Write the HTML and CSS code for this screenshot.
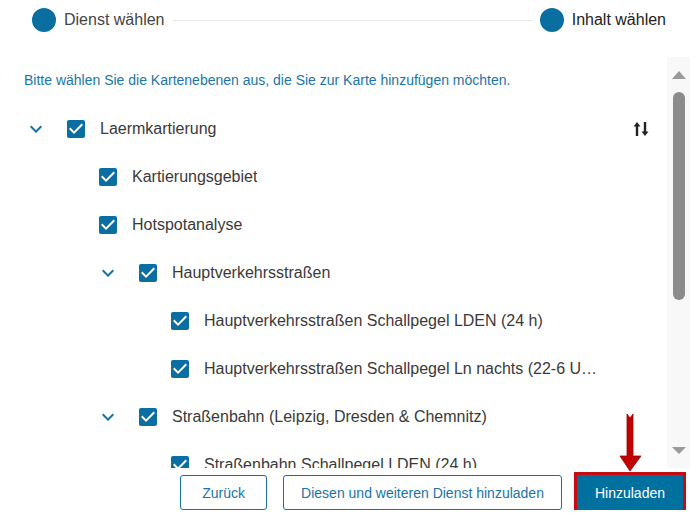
FILE: index.html
```html
<!DOCTYPE html>
<html lang="de">
<head>
    <meta charset="UTF-8">
    <meta name="viewport" content="width=device-width, initial-scale=1.0">
    <title>Dienst hinzuladen - Inhalt wählen</title>
    <link rel="stylesheet" href="styles.css">
</head>
<body>

<!-- Schritte -->
<div class="stepper">
    <div class="step">
        <span class="step-dot"></span>
        <span class="step-label">Dienst wählen</span>
    </div>
    <div class="step-line"></div>
    <div class="step step-active">
        <span class="step-dot"></span>
        <span class="step-label">Inhalt wählen</span>
    </div>
</div>

<!-- Ebenenauswahl -->
<div class="panel">
    <div class="layer-list">
        <p class="hint">Bitte wählen Sie die Kartenebenen aus, die Sie zur Karte hinzufügen möchten.</p>

        <ul class="tree">
            <li class="node d0">
                <svg class="chevron" viewBox="0 0 24 24"><path d="M16.59 8.59L12 13.17 7.41 8.59 6 10l6 6 6-6z"/></svg>
                <svg class="check" viewBox="0 0 24 24"><path d="M19 3H5c-1.11 0-2 .9-2 2v14c0 1.1.89 2 2 2h14c1.11 0 2-.9 2-2V5c0-1.1-.89-2-2-2zm-9 14l-5-5 1.41-1.41L10 14.170l7.59-7.59L19 8l-9 9z"/></svg>
                <span class="label">Laermkartierung</span>
                <span class="node-tools">
                    <svg class="sort" viewBox="0 0 16 14"><path d="M4 0L0.5 4.6h2.3V14h2.4V4.6h2.3z"/><path d="M12 14l3.5-4.6h-2.3V0h-2.4v9.4H8.5z"/></svg>
                </span>
            </li>
            <li class="node d1">
                <svg class="check" viewBox="0 0 24 24"><path d="M19 3H5c-1.11 0-2 .9-2 2v14c0 1.1.89 2 2 2h14c1.11 0 2-.9 2-2V5c0-1.1-.89-2-2-2zm-9 14l-5-5 1.41-1.41L10 14.17l7.59-7.59L19 8l-9 9z"/></svg>
                <span class="label">Kartierungsgebiet</span>
                <span class="node-tools"></span>
            </li>
            <li class="node d1">
                <svg class="check" viewBox="0 0 24 24"><path d="M19 3H5c-1.11 0-2 .9-2 2v14c0 1.1.89 2 2 2h14c1.11 0 2-.9 2-2V5c0-1.1-.89-2-2-2zm-9 14l-5-5 1.41-1.41L10 14.17l7.59-7.59L19 8l-9 9z"/></svg>
                <span class="label">Hotspotanalyse</span>
                <span class="node-tools"></span>
            </li>
            <li class="node d1">
                <svg class="chevron" viewBox="0 0 24 24"><path d="M16.59 8.59L12 13.17 7.41 8.59 6 10l6 6 6-6z"/></svg>
                <svg class="check" viewBox="0 0 24 24"><path d="M19 3H5c-1.11 0-2 .9-2 2v14c0 1.1.89 2 2 2h14c1.11 0 2-.9 2-2V5c0-1.1-.89-2-2-2zm-9 14l-5-5 1.41-1.41L10 14.17l7.59-7.59L19 8l-9 9z"/></svg>
                <span class="label">Hauptverkehrsstraßen</span>
                <span class="node-tools"></span>
            </li>
            <li class="node d2">
                <svg class="check" viewBox="0 0 24 24"><path d="M19 3H5c-1.11 0-2 .9-2 2v14c0 1.1.89 2 2 2h14c1.11 0 2-.9 2-2V5c0-1.1-.89-2-2-2zm-9 14l-5-5 1.41-1.41L10 14.17l7.59-7.59L19 8l-9 9z"/></svg>
                <span class="label">Hauptverkehrsstraßen Schallpegel LDEN (24 h)</span>
                <span class="node-tools"></span>
            </li>
            <li class="node d2">
                <svg class="check" viewBox="0 0 24 24"><path d="M19 3H5c-1.11 0-2 .9-2 2v14c0 1.1.89 2 2 2h14c1.11 0 2-.9 2-2V5c0-1.1-.89-2-2-2zm-9 14l-5-5 1.41-1.41L10 14.17l7.59-7.59L19 8l-9 9z"/></svg>
                <span class="label">Hauptverkehrsstraßen Schallpegel Ln nachts (22-6 Uhr)</span>
                <span class="node-tools"></span>
            </li>
            <li class="node d1">
                <svg class="chevron" viewBox="0 0 24 24"><path d="M16.59 8.59L12 13.17 7.41 8.59 6 10l6 6 6-6z"/></svg>
                <svg class="check" viewBox="0 0 24 24"><path d="M19 3H5c-1.11 0-2 .9-2 2v14c0 1.1.89 2 2 2h14c1.11 0 2-.9 2-2V5c0-1.1-.89-2-2-2zm-9 14l-5-5 1.41-1.41L10 14.17l7.59-7.59L19 8l-9 9z"/></svg>
                <span class="label">Straßenbahn (Leipzig, Dresden &amp; Chemnitz)</span>
                <span class="node-tools"></span>
            </li>
            <li class="node d2">
                <svg class="check" viewBox="0 0 24 24"><path d="M19 3H5c-1.11 0-2 .9-2 2v14c0 1.1.89 2 2 2h14c1.11 0 2-.9 2-2V5c0-1.1-.89-2-2-2zm-9 14l-5-5 1.41-1.41L10 14.17l7.59-7.59L19 8l-9 9z"/></svg>
                <span class="label">Straßenbahn Schallpegel LDEN (24 h)</span>
                <span class="node-tools"></span>
            </li>
        </ul>
    </div>

    <!-- Scrollleiste -->
    <div class="scrollbar">
        <span class="sb-up"></span>
        <span class="sb-thumb"></span>
        <span class="sb-down"></span>
    </div>
</div>

<!-- Aktionen -->
<div class="actions">
    <button class="btn">Zurück</button>
    <button class="btn">Diesen und weiteren Dienst hinzuladen</button>
    <span class="annotated">
        <svg class="pointer" viewBox="0 0 24 58"><path d="M8 0L11 4 14 0V42h8L11 57 1 42h7z"/></svg>
        <button class="btn btn-primary">Hinzuladen</button>
    </span>
</div>

</body>
</html>
```

FILE: styles.css
```css
body {
    font-family: 'Liberation Sans', Arial, sans-serif;
    color: #3a3a3a;
    background-color: #fff;
    margin: 0;
    padding: 0;
}

/* Schritte */
.stepper {
    display: flex;
    align-items: center;
    padding: 8px 32px 0 32px;
}
.step {
    display: flex;
    align-items: center;
    gap: 8px;
}
.step-dot {
    width: 24px;
    height: 24px;
    border-radius: 50%;
    background-color: #0a6fa0;
}
.step-label {
    font-size: 16px;
    color: #444;
}
.step-active .step-label {
    color: #222;
}
.step-line {
    flex: 1;
    height: 1px;
    margin: 0 8px;
    background-color: #e6e6e6;
}

/* Ebenenauswahl */
.panel {
    display: flex;
    height: 411px;
    margin: 25px 8px 0 0;
}
.layer-list {
    flex: 1;
    min-width: 0;
    overflow: hidden;
}
.hint {
    margin: 0;
    padding: 15px 0 0 24px;
    font-size: 14px;
    line-height: 16px;
    color: #1a76a8;
}
.tree {
    list-style: none;
    margin: 17px 0 0;
    padding: 0;
}
.node {
    display: flex;
    align-items: center;
    height: 48px;
    padding-right: 18px;
}
.d0 { padding-left: 24px; }
.d1 { padding-left: 96px; }
.d2 { padding-left: 168px; }

.chevron {
    width: 24px;
    height: 24px;
    margin-right: 16px;
    flex-shrink: 0;
    fill: #1670a3;
}
.check {
    width: 24px;
    height: 24px;
    margin-right: 12px;
    flex-shrink: 0;
    fill: #0a6fa0;
}
.label {
    font-size: 16px;
    white-space: nowrap;
    overflow: hidden;
    text-overflow: ellipsis;
    min-width: 0;
    margin-right: auto;
}
.node-tools {
    width: 50px;
    flex-shrink: 0;
    display: flex;
    justify-content: flex-end;
}
.sort {
    width: 16px;
    height: 14px;
    fill: #222;
}

/* Scrollleiste */
.scrollbar {
    width: 23px;
    flex-shrink: 0;
    display: flex;
    flex-direction: column;
    align-items: center;
    padding: 14px 0;
    box-sizing: border-box;
    background-color: #f8f8f8;
}
.sb-up, .sb-down {
    width: 0;
    height: 0;
    border-left: 7.5px solid transparent;
    border-right: 7.5px solid transparent;
}
.sb-up {
    border-bottom: 8px solid #9a9a9a;
}
.sb-down {
    margin-top: auto;
    border-top: 7px solid #9a9a9a;
}
.sb-thumb {
    width: 12px;
    height: 208px;
    margin-top: 13px;
    border-radius: 6px;
    background-color: #8b8b8b;
}

/* Aktionen */
.actions {
    display: flex;
    justify-content: flex-end;
    align-items: center;
    gap: 16px;
    padding: 7px 15px 0 0;
}
.btn {
    height: 35px;
    padding: 0 17px;
    font-family: inherit;
    font-size: 14px;
    color: #1a74a8;
    background-color: #fff;
    border: 1px solid #1670a3;
    border-radius: 3px;
    cursor: pointer;
}
.btn:first-child {
    min-width: 87px;
}
.annotated {
    position: relative;
    display: inline-flex;
    margin-left: -1px;
}
.btn-primary {
    color: #fff;
    background-color: #00709f;
    border-color: #00709f;
    border-radius: 0;
    outline: 3px solid #c40d12;
    box-shadow: 0 5px 6px rgba(0, 0, 0, 0.35);
}
.pointer {
    position: absolute;
    left: calc(50% - 11px);
    bottom: calc(100% + 3px);
    width: 24px;
    height: 58px;
    fill: #c00000;
    stroke: #9e0000;
    stroke-width: 0.8;
}
```
